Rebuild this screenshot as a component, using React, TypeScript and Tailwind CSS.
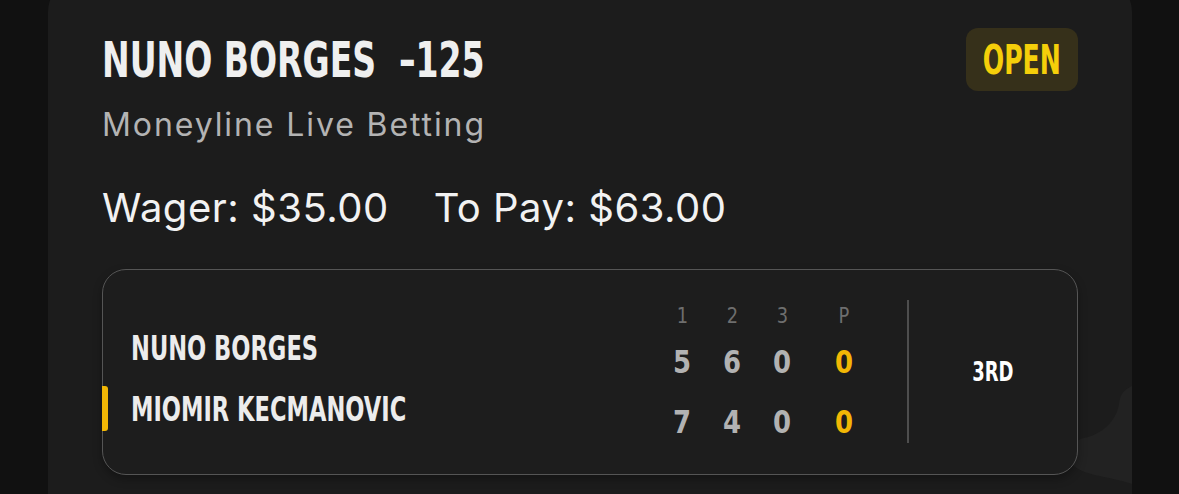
const condensed = "font-['DejaVu_Sans_Condensed','DejaVu_Sans',sans-serif]";
const body = "font-['Inter','Noto_Sans',sans-serif]";

type Player = { name: string; sets: number[]; points: number; serving?: boolean };

const players: Player[] = [
  { name: "NUNO BORGES", sets: [5, 6, 0], points: 0 },
  { name: "MIOMIR KECMANOVIC", sets: [7, 4, 0], points: 0, serving: true },
];

function Watermark() {
  return (
    <svg
      className="absolute right-0 bottom-0 w-[330px] h-[160px]"
      viewBox="0 0 330 160"
      fill="none"
    >
      <path
        d="M330 10 C322 14 318 18 317 28 C314 46 300 58 282 62 C268 66 262 78 272 90 C284 100 306 100 330 108 Z"
        fill="#222222"
      />
      <ellipse cx="112" cy="162" rx="62" ry="34" fill="#212121" />
    </svg>
  );
}

function ScoreCell({ value, accent, head }: { value: string | number; accent?: boolean; head?: boolean }) {
  return (
    <div
      className={
        head
          ? `w-[50px] text-center text-[22px] leading-none text-[#6e6e6e] ${condensed}`
          : `w-[50px] text-center text-[32px] leading-none font-bold ${condensed} ${accent ? "text-[#f2b705]" : "text-[#b2b2b2]"}`
      }
    >
      <span className="inline-block scale-x-[0.9]">{value}</span>
    </div>
  );
}

function Scoreboard() {
  return (
    <div className="relative mt-[41px] h-[206px] rounded-[24px] border-[1.5px] border-[#555555] bg-[#1d1d1d] shadow-[0_4px_10px_rgba(0,0,0,0.3)] flex">
      {/* names */}
      <div className="flex-1 flex flex-col pt-[62px] gap-[28px]">
        {players.map((p) => (
          <div key={p.name} className="relative pl-[28px] h-[33px]">
            {p.serving && (
              <span className="absolute left-[-1.5px] top-[-7px] w-[6px] h-[45px] rounded-r-[3px] bg-[#f2b705]" />
            )}
            <span
              className={`inline-block origin-left scale-x-[0.76] text-[33px] font-bold text-[#ececec] leading-none whitespace-nowrap ${condensed}`}
            >
              {p.name}
            </span>
          </div>
        ))}
      </div>

      {/* set scores */}
      <div className="flex flex-col pt-[35px]">
        <div className="flex h-[22px]">
          <ScoreCell head value="1" />
          <ScoreCell head value="2" />
          <ScoreCell head value="3" />
          <div className="ml-[12px]">
            <ScoreCell head value="P" />
          </div>
        </div>
        {players.map((p, i) => (
          <div key={p.name} className={`flex h-[32px] ${i === 0 ? "mt-[19px]" : "mt-[28px]"}`}>
            {p.sets.map((s, j) => (
              <ScoreCell key={j} value={s} />
            ))}
            <div className="ml-[12px]">
              <ScoreCell accent value={p.points} />
            </div>
          </div>
        ))}
      </div>

      {/* divider */}
      <div className="ml-[38px] mt-[30px] h-[143px] w-[2px] bg-[#4e4e4e]" />

      {/* current set */}
      <div className="w-[168px] flex items-center justify-center">
        <span className={`inline-block scale-x-[0.77] text-[26px] font-bold text-white leading-none ${condensed}`}>
          3RD
        </span>
      </div>
    </div>
  );
}

export default function App() {
  return (
    <div className="w-[1179px] h-[494px] bg-[#111111] overflow-hidden flex">
      <div className="relative ml-[48px] mt-[-24px] w-[1084px] h-[560px] rounded-[36px] bg-[#1c1c1c] px-[54px] pt-[52px]">
        <Watermark />
        <div className="relative flex justify-between items-start">
          <div>
            <h1
              className={`mt-[7px] inline-block origin-left scale-x-[0.735] text-[50px] leading-none font-bold text-[#efefef] whitespace-nowrap ${condensed}`}
            >
              NUNO BORGES&nbsp; –125
            </h1>
            <p className={`mt-[24px] text-[32px] leading-none tracking-[1.9px] text-[#b3b3b3] ${body}`}>
              Moneyline Live Betting
            </p>
            <div className={`mt-[47px] flex gap-[45px] text-[40px] leading-none tracking-[0.5px] text-[#f2f2f2] ${body}`}>
              <span>Wager: $35.00</span>
              <span>To Pay: $63.00</span>
            </div>
          </div>
          <div className="w-[112px] h-[63px] rounded-[12px] bg-[#36301a] flex items-center justify-center">
            <span className={`inline-block scale-x-[0.7] text-[40px] font-bold text-[#f5cf0a] leading-none ${condensed}`}>
              OPEN
            </span>
          </div>
        </div>
        <Scoreboard />
      </div>
    </div>
  );
}
